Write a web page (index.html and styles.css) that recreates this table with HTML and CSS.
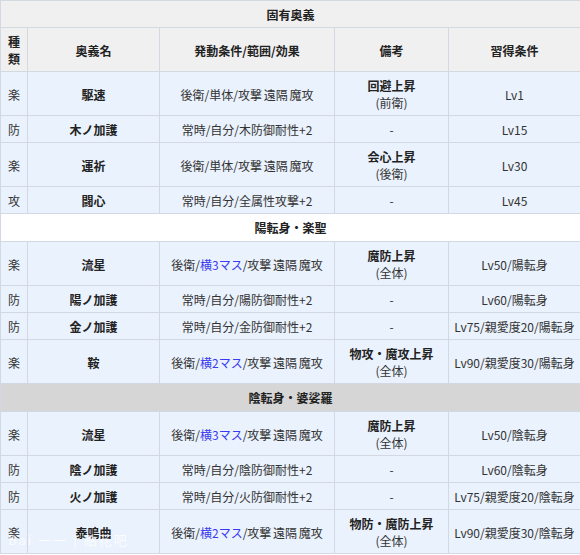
FILE: index.html
```html
<!DOCTYPE html>
<html lang="ja">
<head>
<meta charset="utf-8">
<link rel="stylesheet" href="styles.css">
</head>
<body>
<div class="wrap">
<table class="skills">
  <colgroup>
    <col class="c-type">
    <col class="c-name">
    <col class="c-effect">
    <col class="c-note">
    <col class="c-cond">
  </colgroup>
  <tr class="head"><th colspan="5">固有奥義</th></tr>
  <tr class="head">
    <th>種類</th><th>奥義名</th><th>発動条件/範囲/効果</th><th>備考</th><th>習得条件</th>
  </tr>
  <tr class="tall"><td>楽</td><td class="name">駆速</td><td class="eff">後衛/単体/攻撃 遠隔 魔攻</td><td><b>回避上昇</b><br>(前衛)</td><td>Lv1</td></tr>
  <tr><td>防</td><td class="name">木ノ加護</td><td class="eff">常時/自分/木防御耐性+2</td><td>-</td><td>Lv15</td></tr>
  <tr class="tall"><td>楽</td><td class="name">運祈</td><td class="eff">後衛/単体/攻撃 遠隔 魔攻</td><td><b>会心上昇</b><br>(後衛)</td><td>Lv30</td></tr>
  <tr><td>攻</td><td class="name">闘心</td><td class="eff">常時/自分/全属性攻撃+2</td><td>-</td><td>Lv45</td></tr>
  <tr class="section light"><th colspan="5">陽転身・楽聖</th></tr>
  <tr class="tall"><td>楽</td><td class="name">流星</td><td class="eff">後衛/<span class="link">横3マス</span>/攻撃 遠隔 魔攻</td><td><b>魔防上昇</b><br>(全体)</td><td>Lv50/陽転身</td></tr>
  <tr><td>防</td><td class="name">陽ノ加護</td><td class="eff">常時/自分/陽防御耐性+2</td><td>-</td><td>Lv60/陽転身</td></tr>
  <tr><td>防</td><td class="name">金ノ加護</td><td class="eff">常時/自分/金防御耐性+2</td><td>-</td><td>Lv75/親愛度20/陽転身</td></tr>
  <tr class="tall"><td>楽</td><td class="name">鞍</td><td class="eff">後衛/<span class="link">横2マス</span>/攻撃 遠隔 魔攻</td><td><b>物攻・魔攻上昇</b><br>(全体)</td><td>Lv90/親愛度30/陽転身</td></tr>
  <tr class="section dark"><th colspan="5">陰転身・婆娑羅</th></tr>
  <tr class="tall"><td>楽</td><td class="name">流星</td><td class="eff">後衛/<span class="link">横3マス</span>/攻撃 遠隔 魔攻</td><td><b>魔防上昇</b><br>(全体)</td><td>Lv50/陰転身</td></tr>
  <tr><td>防</td><td class="name">陰ノ加護</td><td class="eff">常時/自分/陰防御耐性+2</td><td>-</td><td>Lv60/陰転身</td></tr>
  <tr><td>防</td><td class="name">火ノ加護</td><td class="eff">常時/自分/火防御耐性+2</td><td>-</td><td>Lv75/親愛度20/陰転身</td></tr>
  <tr class="tall"><td>楽</td><td class="name">泰鳴曲</td><td class="eff">後衛/<span class="link">横2マス</span>/攻撃 遠隔 魔攻</td><td><b>物防・魔防上昇</b><br>(全体)</td><td>Lv90/親愛度30/陰転身</td></tr>
</table>
<div class="watermark">Bai 一一 | 贴花吧</div>
</div>
</body>
</html>
```
FILE: styles.css
```css
html, body {
  margin: 0;
  padding: 0;
  background: #ffffff;
}
body {
  font-family: "Noto Sans CJK JP", "Noto Sans", sans-serif;
  font-size: 12px;
  color: #333333;
}
.wrap {
  position: relative;
  width: 580px;
  height: 555px;
  overflow: hidden;
}
.skills {
  width: 580px;
  border-collapse: collapse;
  table-layout: fixed;
}
.c-type { width: 27px; }
.c-name { width: 132px; }
.c-effect { width: 175px; }
.c-note { width: 114px; }
.c-cond { width: 132px; }
.skills th,
.skills td {
  border: 1px solid #d2d9e3;
  text-align: center;
  vertical-align: middle;
  line-height: 17px;
  padding: 5px 4px 4px;
}
.skills td {
  background: #eaf2fd;
}
.skills th {
  font-weight: bold;
  color: #222222;
}
.head th {
  background: #f0f0f0;
}
.skills td.name {
  font-weight: bold;
  color: #222222;
}
.skills td b {
  color: #222222;
}
.skills td.eff {
  word-spacing: -1px;
}
.section th {
  padding: 5px 4px;
}
.section.light th {
  background: #ffffff;
}
.section.dark th {
  background: #d6d6d6;
}
.link {
  color: #3a3af2;
}
.watermark {
  position: absolute;
  left: 8px;
  top: 532px;
  font-size: 13px;
  line-height: 16px;
  color: rgba(255, 255, 255, 0.8);
  letter-spacing: 2px;
  pointer-events: none;
}
```
